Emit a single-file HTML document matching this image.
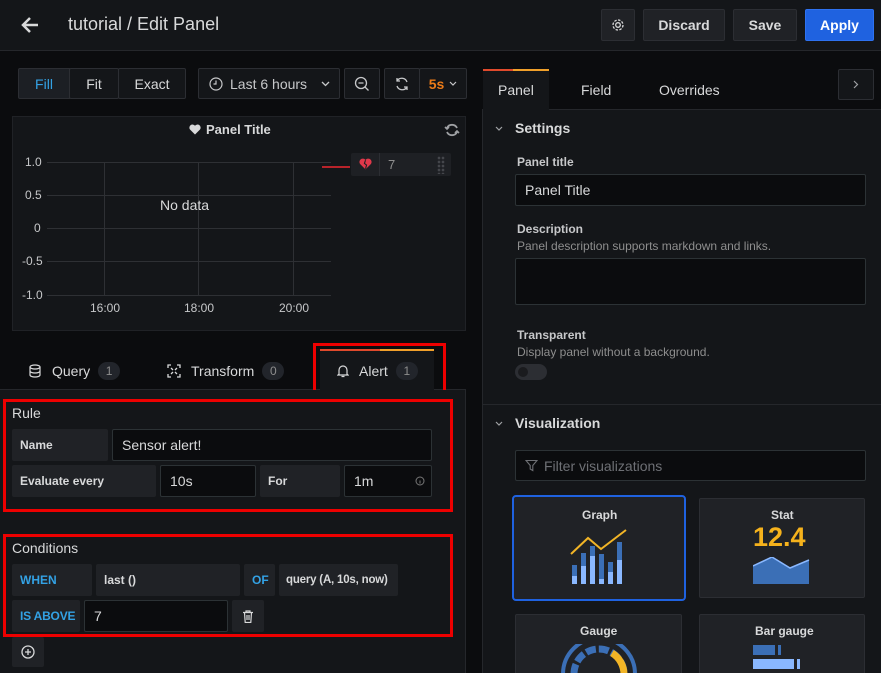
<!DOCTYPE html>
<html><head><meta charset="utf-8"><style>
*{box-sizing:border-box;margin:0;padding:0}
html,body{width:881px;height:673px;overflow:hidden}
body{background:#0b0c0e;font-family:"Liberation Sans",Arial,sans-serif;color:#d8d9da;position:relative;font-size:14px}
.a{position:absolute}
.btn{position:absolute;background:#202226;border:1px solid #2c2e33;border-radius:2px;color:#d8d9da;display:flex;align-items:center;justify-content:center}
.inp{position:absolute;background:#0b0c0e;border:1px solid #2c3235;border-radius:2px;display:flex;align-items:center;padding-left:9px;color:#d8d9da}
.lbl{position:absolute;background:#202226;border-radius:2px;display:flex;align-items:center;padding-left:8px;font-weight:bold;font-size:12px;color:#d8d9da;white-space:nowrap;overflow:hidden}
.red{position:absolute;border:3px solid #e00;}
.badge{display:inline-block;background:#22252b;border-radius:9px;width:22px;height:18px;line-height:18px;text-align:center;font-size:12px;color:#8e8e8e;margin-left:8px}
.gl{position:absolute;background:#2e3034}
.ax{position:absolute;font-size:12px;color:#c7c8ca}
</style></head><body>
<div class="a" style="left:0;top:0;width:881px;height:51px;background:#141619;border-bottom:1px solid #25272b"></div>
<svg class="a" style="left:19px;top:14px" width="22" height="22" viewBox="0 0 22 22"><path d="M19 11H4M11 4L4 11l7 7" stroke="#d8d9da" stroke-width="2.5" fill="none"/></svg>
<div class="a" style="left:68px;top:14px;font-size:18px;color:#d8d9da">tutorial / Edit Panel</div>
<div class="btn" style="left:601px;top:9px;width:34px;height:32px"><svg width="14" height="14" viewBox="0 0 14 14"><circle cx="7" cy="7" r="2.3" stroke="#d8d9da" fill="none" stroke-width="1.3"/><circle cx="7" cy="7" r="5" stroke="#d8d9da" fill="none" stroke-width="1.3" stroke-dasharray="2.5 1.4"/></svg></div>
<div class="btn" style="left:643px;top:9px;width:82px;height:32px;font-weight:bold">Discard</div>
<div class="btn" style="left:733px;top:9px;width:64px;height:32px;font-weight:bold">Save</div>
<div class="btn" style="left:805px;top:9px;width:69px;height:32px;background:#1f62e0;border-color:#2e72f0;color:#fff;font-weight:bold">Apply</div>

<div class="btn" style="left:18px;top:68px;width:52px;height:31px;background:#1c1f24;color:#33a2e5;border-radius:2px 0 0 2px">Fill</div>
<div class="btn" style="left:69px;top:68px;width:50px;height:31px;background:#141619">Fit</div>
<div class="btn" style="left:118px;top:68px;width:68px;height:31px;background:#141619">Exact</div>
<div class="btn" style="left:198px;top:68px;width:142px;height:31px;background:#141619;justify-content:flex-start;padding-left:10px;color:#c7c8ca"><svg width="14" height="14" viewBox="0 0 14 14"><circle cx="7" cy="7" r="6" stroke="#c7c8ca" fill="none" stroke-width="1.2"/><path d="M7 3.5V7H4.5" stroke="#c7c8ca" fill="none" stroke-width="1.2"/></svg><span style="margin-left:7px">Last 6 hours</span><svg style="margin-left:14px" width="9" height="6" viewBox="0 0 9 6"><path d="M1 1l3.5 3.5L8 1" stroke="#c7c8ca" fill="none" stroke-width="1.3"/></svg></div>
<div class="btn" style="left:344px;top:68px;width:36px;height:31px;background:#141619"><svg width="16" height="16" viewBox="0 0 16 16"><circle cx="7" cy="7" r="5.5" stroke="#c7c8ca" fill="none" stroke-width="1.3"/><path d="M4.5 7h5M11 11l3.5 3.5" stroke="#c7c8ca" stroke-width="1.3"/></svg></div>
<div class="btn" style="left:384px;top:68px;width:36px;height:31px;background:#141619"><svg width="16" height="16" viewBox="0 0 16 16"><path d="M13 6A5.5 5.5 0 0 0 3 5M3 10a5.5 5.5 0 0 0 10 1M3 2v3h3M13 14v-3h-3" stroke="#c7c8ca" fill="none" stroke-width="1.3"/></svg></div>
<div class="btn" style="left:419px;top:68px;width:48px;height:31px;background:#141619;color:#eb7b18;font-weight:bold">5s<svg style="margin-left:5px" width="8" height="5" viewBox="0 0 8 5"><path d="M1 1l3 3 3-3" stroke="#c7c8ca" fill="none" stroke-width="1.2"/></svg></div>

<div class="a" style="left:12px;top:116px;width:454px;height:215px;background:#141619;border:1px solid #202226"></div>
<div class="a" style="left:189px;top:122px;font-weight:bold;font-size:13px;color:#d8d9da;display:flex;align-items:center"><svg width="12" height="11" viewBox="0 0 12 11"><path d="M6 10.5L1 5.5A2.8 2.8 0 0 1 6 1.8 2.8 2.8 0 0 1 11 5.5z" fill="#d8d9da"/></svg><span style="margin-left:5px">Panel Title</span></div>
<svg class="a" style="left:444px;top:122px" width="16" height="16" viewBox="0 0 16 16"><path d="M13 6A5.5 5.5 0 0 0 3 6M3 10a5.5 5.5 0 0 0 10 0" stroke="#9fa1a4" fill="none" stroke-width="1.8"/><path d="M1 5l2 2 2-2M15 11l-2-2-2 2" stroke="#9fa1a4" fill="none" stroke-width="1.6"/></svg>
<div class="gl" style="left:47px;top:162px;width:284px;height:1px"></div>
<div class="gl" style="left:47px;top:195px;width:284px;height:1px"></div>
<div class="gl" style="left:47px;top:228px;width:284px;height:1px"></div>
<div class="gl" style="left:47px;top:261px;width:284px;height:1px"></div>
<div class="gl" style="left:47px;top:295px;width:284px;height:1px"></div>
<div class="gl" style="left:104px;top:162px;width:1px;height:133px"></div>
<div class="gl" style="left:198px;top:162px;width:1px;height:133px"></div>
<div class="gl" style="left:293px;top:162px;width:1px;height:133px"></div>
<div class="ax" style="left:25px;top:155px">1.0</div>
<div class="ax" style="left:25px;top:188px">0.5</div>
<div class="ax" style="left:34px;top:221px">0</div>
<div class="ax" style="left:22px;top:254px">-0.5</div>
<div class="ax" style="left:22px;top:288px">-1.0</div>
<div class="ax" style="left:90px;top:301px">16:00</div>
<div class="ax" style="left:184px;top:301px">18:00</div>
<div class="ax" style="left:279px;top:301px">20:00</div>
<div class="a" style="left:160px;top:197px;font-size:14px;color:#d8d9da">No data</div>
<div class="a" style="left:322px;top:166px;width:28px;height:2px;background:#b8232a"></div>
<div class="a" style="left:351px;top:153px;width:100px;height:23px;background:#1e2024;border-radius:2px"></div>
<div class="a" style="left:379px;top:153px;width:1px;height:23px;background:#2c2e33"></div>
<svg class="a" style="left:359px;top:158px" width="13" height="12" viewBox="0 0 12 11"><path d="M6 10.5L1 5.5A2.8 2.8 0 0 1 6 1.8 2.8 2.8 0 0 1 11 5.5z" fill="#e0384a"/><path d="M6 2L5 5l2 1.5L6 10" stroke="#1e2024" fill="none" stroke-width="1"/></svg>
<div class="a" style="left:388px;top:157px;color:#8e8e8e;font-size:13px">7</div>
<div class="a" style="left:437px;top:156px;width:8px;height:18px;background:radial-gradient(circle,#44464b 1.2px,transparent 1.5px) 0 0/4px 4px"></div>

<div class="a" style="left:0;top:389px;width:466px;height:1px;background:#25272b"></div>
<div class="a" style="left:29px;top:362px;font-size:14px;color:#d8d9da;display:flex;align-items:center"><svg width="12" height="14" viewBox="0 0 12 14"><ellipse cx="6" cy="3" rx="5" ry="2" stroke="#d8d9da" fill="none" stroke-width="1.2"/><path d="M1 3v8c0 1.1 2.2 2 5 2s5-.9 5-2V3M1 7c0 1.1 2.2 2 5 2s5-.9 5-2" stroke="#d8d9da" fill="none" stroke-width="1.2"/></svg><span style="margin-left:11px">Query</span><span class="badge">1</span></div>
<div class="a" style="left:167px;top:362px;font-size:14px;color:#d8d9da;display:flex;align-items:center"><svg width="14" height="14" viewBox="0 0 14 14"><path d="M1 4V1h3M10 1h3v3M13 10v3h-3M4 13H1v-3M4 4l2 2M10 4L8 6M10 10L8 8M4 10l2-2" stroke="#d8d9da" fill="none" stroke-width="1.3"/></svg><span style="margin-left:10px">Transform</span><span class="badge">0</span></div>
<div class="a" style="left:320px;top:349px;width:114px;height:42px;background:#141619;border-top:2px solid #f0a02a"></div>
<div class="a" style="left:320px;top:349px;width:60px;height:2px;background:#e04a2c"></div>
<div class="a" style="left:337px;top:362px;font-size:14px;color:#d8d9da;display:flex;align-items:center"><svg width="12" height="14" viewBox="0 0 12 14"><path d="M2 10V6a4 4 0 0 1 8 0v4l1 1H1zM4.5 12.5h3" stroke="#d8d9da" fill="none" stroke-width="1.2"/></svg><span style="margin-left:10px">Alert</span><span class="badge">1</span></div>
<div class="red" style="left:313px;top:343px;width:133px;height:51px"></div>

<div class="a" style="left:0;top:390px;width:466px;height:283px;background:#141619;border-right:1px solid #25272b"></div>
<div class="a" style="left:12px;top:405px;font-size:14px">Rule</div>
<div class="lbl" style="left:12px;top:429px;width:96px;height:32px">Name</div>
<div class="inp" style="left:112px;top:429px;width:320px;height:32px">Sensor alert!</div>
<div class="lbl" style="left:12px;top:465px;width:144px;height:32px">Evaluate every</div>
<div class="inp" style="left:160px;top:465px;width:96px;height:32px">10s</div>
<div class="lbl" style="left:260px;top:465px;width:80px;height:32px">For</div>
<div class="inp" style="left:344px;top:465px;width:88px;height:32px">1m<svg style="margin-left:42px" width="10" height="10" viewBox="0 0 10 10"><circle cx="5" cy="5" r="4" stroke="#777" fill="none"/><path d="M5 4.5v3" stroke="#777"/></svg></div>
<div class="red" style="left:3px;top:399px;width:450px;height:113px"></div>

<div class="a" style="left:12px;top:540px;font-size:14px">Conditions</div>
<div class="lbl" style="left:12px;top:564px;width:80px;height:32px;color:#33a2e5">WHEN</div>
<div class="lbl" style="left:96px;top:564px;width:144px;height:32px">last ()</div>
<div class="lbl" style="left:244px;top:564px;width:31px;height:32px;color:#33a2e5">OF</div>
<div class="lbl" style="left:279px;top:564px;width:119px;height:32px;font-size:11.5px;padding-left:7px;letter-spacing:-0.2px">query (A, 10s, now)</div>
<div class="lbl" style="left:12px;top:600px;width:68px;height:32px;color:#33a2e5;letter-spacing:-0.2px">IS ABOVE</div>
<div class="inp" style="left:84px;top:600px;width:144px;height:32px">7</div>
<div class="lbl" style="left:232px;top:600px;width:32px;height:32px;padding:0;justify-content:center"><svg width="12" height="13" viewBox="0 0 12 13"><path d="M1 2.5h10M4 2.5V1h4v1.5M2.5 2.5l.7 10h5.6l.7-10M5 5v5M7 5v5" stroke="#d8d9da" fill="none" stroke-width="1.2"/></svg></div>
<div class="red" style="left:3px;top:534px;width:450px;height:103px"></div>
<div class="lbl" style="left:12px;top:637px;width:32px;height:30px;padding:0;justify-content:center"><svg width="14" height="14" viewBox="0 0 14 14"><circle cx="7" cy="7" r="6" stroke="#d8d9da" fill="none" stroke-width="1.3"/><path d="M7 4v6M4 7h6" stroke="#d8d9da" stroke-width="1.3"/></svg></div>

<div class="a" style="left:482px;top:109px;width:399px;height:564px;background:#141619;border-left:1px solid #25272b"></div>
<div class="a" style="left:482px;top:109px;width:399px;height:1px;background:#25272b"></div>
<div class="a" style="left:483px;top:69px;width:66px;height:41px;background:#141619;border-top:2px solid #f0a02a"></div>
<div class="a" style="left:483px;top:69px;width:30px;height:2px;background:#e04a2c"></div>
<div class="a" style="left:498px;top:82px">Panel</div>
<div class="a" style="left:581px;top:82px">Field</div>
<div class="a" style="left:659px;top:82px">Overrides</div>
<div class="btn" style="left:838px;top:69px;width:36px;height:31px;background:#141619"><svg width="6" height="9" viewBox="0 0 6 9"><path d="M1 1l3.5 3.5L1 8" stroke="#9fa1a4" fill="none" stroke-width="1.2"/></svg></div>
<svg class="a" style="left:495px;top:126px" width="8" height="5" viewBox="0 0 8 5"><path d="M1 1l3 3 3-3" stroke="#9fa1a4" fill="none" stroke-width="1.2"/></svg>
<div class="a" style="left:515px;top:120px;font-weight:bold;font-size:14px">Settings</div>
<div class="a" style="left:517px;top:155px;font-size:12px;font-weight:bold;color:#c7c8ca">Panel title</div>
<div class="inp" style="left:515px;top:174px;width:351px;height:32px">Panel Title</div>
<div class="a" style="left:517px;top:222px;font-size:12px;font-weight:bold;color:#c7c8ca">Description</div>
<div class="a" style="left:517px;top:239px;font-size:12px;color:#8e8e8e">Panel description supports markdown and links.</div>
<div class="inp" style="left:515px;top:258px;width:351px;height:47px"></div>
<div class="a" style="left:517px;top:328px;font-size:12px;font-weight:bold;color:#c7c8ca">Transparent</div>
<div class="a" style="left:517px;top:345px;font-size:12px;color:#8e8e8e">Display panel without a background.</div>
<div class="a" style="left:515px;top:364px;width:32px;height:16px;border-radius:8px;background:#2c2e33"></div>
<div class="a" style="left:518px;top:367px;width:10px;height:10px;border-radius:5px;background:#1a1b1e"></div>
<div class="a" style="left:482px;top:404px;width:399px;height:1px;background:#25272b"></div>
<svg class="a" style="left:495px;top:421px" width="8" height="5" viewBox="0 0 8 5"><path d="M1 1l3 3 3-3" stroke="#9fa1a4" fill="none" stroke-width="1.2"/></svg>
<div class="a" style="left:515px;top:415px;font-weight:bold;font-size:14px">Visualization</div>
<div class="inp" style="left:515px;top:450px;width:351px;height:31px;color:#6e7075"><svg width="13" height="13" viewBox="0 0 13 13"><path d="M1 1.5h11L7.8 6.5v5L5.2 10V6.5z" stroke="#6e7075" fill="none" stroke-width="1.1"/></svg><span style="margin-left:6px">Filter visualizations</span></div>
<div class="a" style="left:512px;top:495px;width:174px;height:106px;background:#202226;border:2px solid #1f62e0;border-radius:4px"></div>
<div class="a" style="left:582px;top:508px;font-size:12px;font-weight:bold">Graph</div>
<svg class="a" style="left:570px;top:528px" width="60" height="56" viewBox="0 0 60 56"><g fill="#3b6fb6"><rect x="2" y="37" width="5" height="19"/><rect x="11" y="25" width="5" height="31"/><rect x="20" y="18" width="5" height="38"/><rect x="29" y="26" width="5" height="30"/><rect x="38" y="34" width="5" height="22"/><rect x="47" y="14" width="5" height="42"/></g><g fill="#8ab8ff"><rect x="2" y="48" width="5" height="8"/><rect x="11" y="38" width="5" height="18"/><rect x="20" y="28" width="5" height="28"/><rect x="29" y="51" width="5" height="5"/><rect x="38" y="44" width="5" height="12"/><rect x="47" y="32" width="5" height="24"/></g><path d="M1 26L18 10l13 11L56 2" stroke="#f2b526" stroke-width="2" fill="none"/></svg>
<div class="a" style="left:699px;top:498px;width:166px;height:100px;background:#202226;border:1px solid #2c2e33;border-radius:2px"></div>
<div class="a" style="left:771px;top:508px;font-size:12px;font-weight:bold">Stat</div>
<div class="a" style="left:753px;top:522px;font-size:27px;font-weight:bold;color:#f5b21c">12.4</div>
<svg class="a" style="left:753px;top:557px" width="57" height="27" viewBox="0 0 57 27"><path d="M0 9L19 0l18 11L56 3v24H0z" fill="#3b6fb6"/><path d="M0 9L19 0l18 11L56 3" stroke="#8ab8ff" stroke-width="1.5" fill="none"/></svg>
<div class="a" style="left:515px;top:614px;width:167px;height:70px;background:#202226;border:1px solid #2c2e33;border-radius:2px"></div>
<div class="a" style="left:580px;top:624px;font-size:12px;font-weight:bold">Gauge</div>
<svg class="a" style="left:560px;top:644px" width="78" height="30" viewBox="0 0 78 30"><path d="M3 30A36 36 0 0 1 75 30" stroke="#3b6fb6" stroke-width="4" fill="none"/><path d="M14 30A25 25 0 0 1 64 30" stroke="#3b6fb6" stroke-width="7" fill="none" stroke-dasharray="10 3"/><path d="M52 9A25 25 0 0 1 64 30" stroke="#f2b526" stroke-width="7" fill="none"/></svg>
<div class="a" style="left:699px;top:614px;width:166px;height:70px;background:#202226;border:1px solid #2c2e33;border-radius:2px"></div>
<div class="a" style="left:755px;top:624px;font-size:12px;font-weight:bold">Bar gauge</div>
<div class="a" style="left:753px;top:645px;width:22px;height:10px;background:#3b6fb6"></div>
<div class="a" style="left:778px;top:645px;width:3px;height:10px;background:#3b6fb6"></div>
<div class="a" style="left:753px;top:659px;width:41px;height:10px;background:#8ab8ff"></div>
<div class="a" style="left:797px;top:659px;width:3px;height:10px;background:#8ab8ff"></div>
</body></html>
